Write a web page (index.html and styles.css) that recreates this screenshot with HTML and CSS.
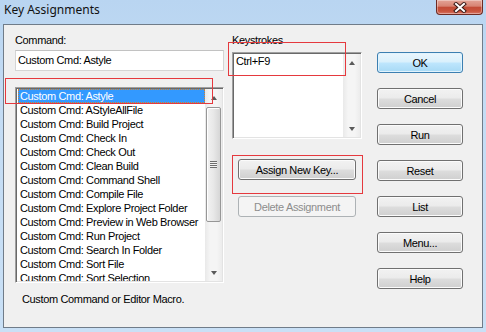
FILE: index.html
```html
<!DOCTYPE html>
<html lang="en">
<head>
    <meta charset="UTF-8">
    <meta name="viewport" content="width=device-width, initial-scale=1.0">
    <title>Key Assignments</title>
    <link rel="stylesheet" href="styles.css">
</head>
<body>

    <!-- Dialog Window -->
    <div class="window">
        <div class="titlebar">
            <span class="title">Key Assignments</span>
            <button class="close-btn" aria-label="Close">
                <svg width="14" height="11" viewBox="0 0 14 11">
                    <path d="M3 2 L11 9 M11 2 L3 9" stroke="#3b1a17" stroke-width="4" stroke-linecap="square"/>
                    <path d="M3 2 L11 9 M11 2 L3 9" stroke="#ffffff" stroke-width="2" stroke-linecap="square"/>
                </svg>
            </button>
        </div>

        <div class="client">
            <!-- Command column -->
            <div class="col-left">
                <div class="label">Command:</div>
                <div class="edit">Custom Cmd: Astyle</div>
                <div class="listbox commands">
                    <ul class="items">
                        <li class="selected">Custom Cmd: Astyle</li>
                        <li>Custom Cmd: AStyleAllFile</li>
                        <li>Custom Cmd: Build Project</li>
                        <li>Custom Cmd: Check In</li>
                        <li>Custom Cmd: Check Out</li>
                        <li>Custom Cmd: Clean Build</li>
                        <li>Custom Cmd: Command Shell</li>
                        <li>Custom Cmd: Compile File</li>
                        <li>Custom Cmd: Explore Project Folder</li>
                        <li>Custom Cmd: Preview in Web Browser</li>
                        <li>Custom Cmd: Run Project</li>
                        <li>Custom Cmd: Search In Folder</li>
                        <li>Custom Cmd: Sort File</li>
                        <li>Custom Cmd: Sort Selection</li>
                    </ul>
                    <div class="scrollbar">
                        <span class="arrow-btn"><span class="arrow up"></span></span>
                        <span class="track">
                            <span class="thumb"><span class="grip"></span></span>
                        </span>
                        <span class="arrow-btn"><span class="arrow down"></span></span>
                    </div>
                </div>
                <p class="desc">Custom Command or Editor Macro.</p>
            </div>

            <!-- Keystrokes column -->
            <div class="col-mid">
                <div class="label">Keystrokes</div>
                <div class="listbox keys">
                    <ul class="items">
                        <li>Ctrl+F9</li>
                    </ul>
                    <div class="scrollbar">
                        <span class="arrow-btn"><span class="arrow up"></span></span>
                        <span class="track"></span>
                        <span class="arrow-btn"><span class="arrow down"></span></span>
                    </div>
                </div>
                <button class="btn wide">Assign New Key...</button>
                <button class="btn wide delete" disabled>Delete Assignment</button>
            </div>

            <!-- Action buttons -->
            <div class="col-right">
                <button class="btn default">OK</button>
                <button class="btn">Cancel</button>
                <button class="btn">Run</button>
                <button class="btn">Reset</button>
                <button class="btn">List</button>
                <button class="btn">Menu...</button>
                <button class="btn">Help</button>
            </div>

            <!-- Red annotation boxes -->
            <div class="mark mark-1"></div>
            <div class="mark mark-2"></div>
            <div class="mark mark-3"></div>
        </div>
    </div>

</body>
</html>
```

FILE: styles.css
```css
    /* Page */
    body {
        margin: 0;
        padding: 0;
        font-family: 'Liberation Sans', Arial, sans-serif;
        font-size: 11px;
        letter-spacing: -0.35px;
        color: #000000;
    }

    /* Window Frame */
    .window {
        width: 486px;
        height: 332px;
        box-sizing: border-box;
        padding: 0 3px 4px 3px;
        background: linear-gradient(180deg, #b9d5f1, #c4dcf4 30%, #c9e0f6);
        display: flex;
        flex-direction: column;
    }

    /* Title Bar */
    .titlebar {
        height: 24px;
        display: flex;
        align-items: flex-start;
    }

    .title {
        font-family: 'Noto Sans', 'Open Sans', sans-serif;
        font-size: 12px;
        letter-spacing: 0;
        line-height: 20px;
        padding-left: 1px;
        color: #111111;
    }

    .close-btn {
        margin-left: auto;
        width: 47px;
        height: 15px;
        padding: 0;
        border: 1px solid #6e2a22;
        border-top: none;
        border-radius: 0 0 4px 4px;
        background: linear-gradient(180deg, #e3a497 0%, #d78372 45%, #c24b36 50%, #c9543d 80%, #d8786a 100%);
        box-shadow: inset 0 0 0 1px rgba(255, 255, 255, 0.35);
        display: flex;
        align-items: center;
        justify-content: center;
    }

    /* Client Area */
    .client {
        position: relative;
        height: 304px;
        box-sizing: border-box;
        border: 1px solid #707c89;
        background: #f0f0f0;
        display: flex;
        align-items: flex-start;
        padding: 9px 0 0 11px;
    }

    .label {
        line-height: 13px;
        height: 13px;
    }

    /* Left Column */
    .col-left {
        width: 209px;
        display: flex;
        flex-direction: column;
    }

    .edit {
        margin-top: 3px;
        height: 21px;
        box-sizing: border-box;
        border: 1px solid #d5d5d5;
        border-top-color: #c2c2c2;
        background: #ffffff;
        padding-left: 2px;
        line-height: 19px;
    }

    /* Sunken List Boxes */
    .listbox {
        box-sizing: border-box;
        border: 1px solid;
        border-color: #a0a0a0 #ffffff #ffffff #a0a0a0;
        box-shadow: inset 1px 1px 0 #696969, inset -1px -1px 0 #e3e3e3;
        padding: 1px;
        background: #ffffff;
        display: flex;
    }

    .listbox.commands {
        margin-top: 16px;
        height: 196px;
    }

    .listbox.keys {
        margin-top: 5px;
        height: 87px;
    }

    .items {
        flex: 1;
        margin: 0;
        padding: 0 0 0 1px;
        list-style: none;
        overflow: hidden;
    }

    .items li {
        height: 14px;
        line-height: 14px;
        padding-left: 1px;
        border: 1px solid transparent;
        border-width: 0 1px;
        white-space: nowrap;
    }

    .items li.selected {
        background: #3399ff;
        color: #ffffff;
        border: 1px dotted #d08030;
        border-width: 0 1px;
        outline: 1px dotted #d08030;
        outline-offset: -1px;
    }

    .keys .items li {
        padding-left: 0;
        line-height: 15px;
    }

    /* Scrollbars */
    .scrollbar {
        width: 17px;
        display: flex;
        flex-direction: column;
        background: linear-gradient(90deg, #e9e9e9, #f5f5f5 30%, #f5f5f5 70%, #ececec);
    }

    .arrow-btn {
        height: 17px;
        display: flex;
        align-items: center;
        justify-content: center;
    }

    .arrow {
        width: 0;
        height: 0;
        border-left: 3.5px solid transparent;
        border-right: 3.5px solid transparent;
    }

    .arrow.up { border-bottom: 4px solid #5a5a5a; }
    .arrow.down { border-top: 4px solid #5a5a5a; }

    .track {
        flex: 1;
        display: flex;
        flex-direction: column;
    }

    .thumb {
        margin: 1px 0 0 1px;
        width: 15px;
        height: 115px;
        box-sizing: border-box;
        border: 1px solid #979797;
        border-radius: 2px;
        background: linear-gradient(90deg, #f2f2f2, #e8e8e8 50%, #d6d6d6);
        box-shadow: inset 1px 1px 0 #ffffff;
        display: flex;
        align-items: center;
        justify-content: center;
    }

    .grip {
        width: 7px;
        height: 7px;
        background: repeating-linear-gradient(180deg, #6e6e6e 0 1px, #f4f4f4 1px 2px);
    }

    .desc {
        margin: 10px 0 0 0;
        padding-left: 7px;
        line-height: 13px;
    }

    /* Middle Column */
    .col-mid {
        width: 130px;
        margin-left: 8px;
        display: flex;
        flex-direction: column;
    }

    /* Win7 Push Buttons */
    .btn {
        height: 21px;
        padding: 0;
        box-sizing: border-box;
        border: 1px solid #707070;
        border-radius: 3px;
        background: linear-gradient(180deg, #f2f2f2 0%, #ebebeb 48%, #dddddd 52%, #cfcfcf 100%);
        box-shadow: inset 0 0 0 1px #fbfbfb;
        font-family: 'Liberation Sans', Arial, sans-serif;
        font-size: 11px;
        letter-spacing: -0.35px;
        color: #000000;
        line-height: 18px;
    }

    .btn.wide {
        width: 118px;
        margin-left: 6px;
        margin-top: 20px;
    }

    .btn.delete {
        margin-top: 16px;
        border-color: #adb2b5;
        background: #f4f4f4;
        box-shadow: none;
        color: #8d8d8d;
    }

    .btn.default {
        border-color: #3c7fb1;
        background: linear-gradient(180deg, #eaf6fd 0%, #d9f0fc 48%, #bee6fd 52%, #a7d9f5 100%);
        box-shadow: inset 0 0 0 1px #e1f3fd;
    }

    /* Right Column */
    .col-right {
        width: 86px;
        margin-left: 15px;
        padding-top: 18px;
        display: flex;
        flex-direction: column;
        gap: 15px;
    }

    /* Red Annotation Boxes */
    .mark {
        position: absolute;
        box-sizing: border-box;
        border: 1px solid #e5393e;
        pointer-events: none;
    }

    .mark-1 { left: 1px; top: 53px; width: 208px; height: 26px; }
    .mark-2 { left: 224px; top: 17px; width: 118px; height: 34px; }
    .mark-3 { left: 228px; top: 130px; width: 131px; height: 39px; }
```
